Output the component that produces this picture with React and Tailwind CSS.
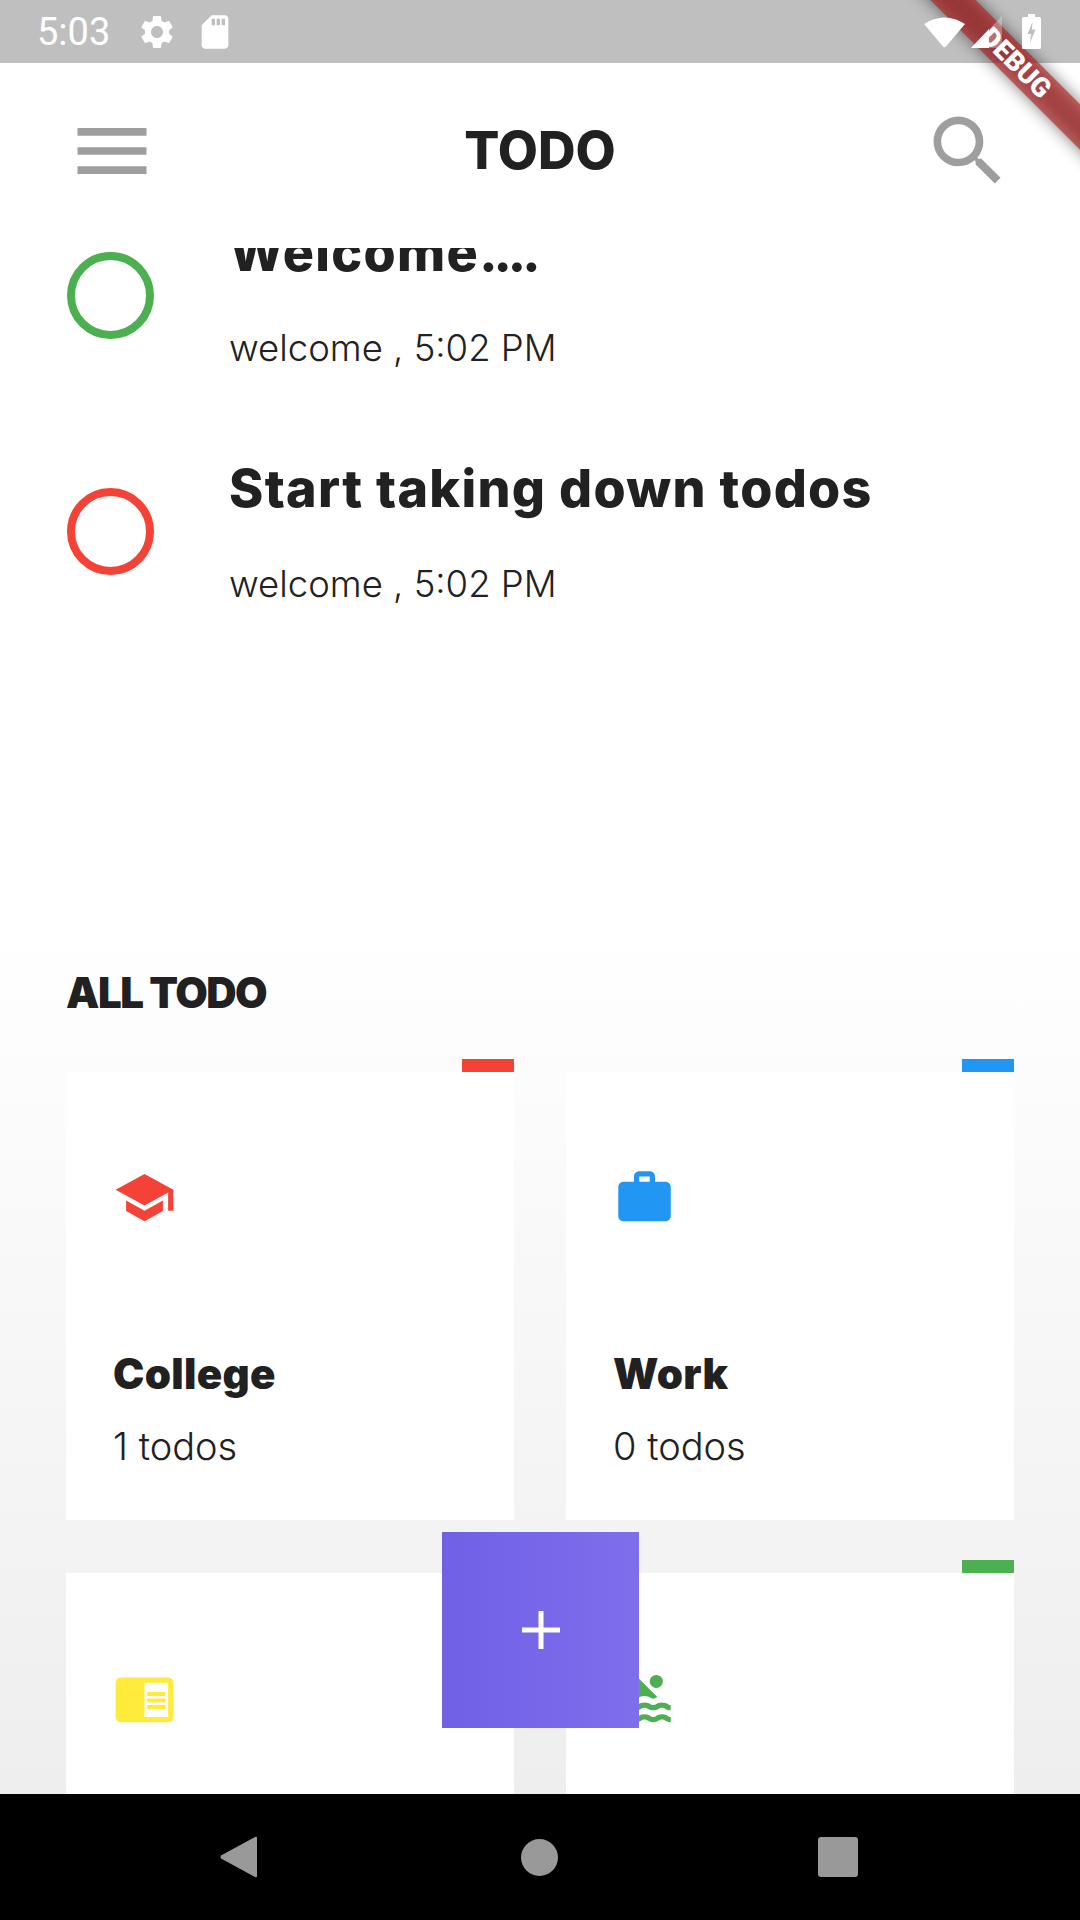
import { MdMenu, MdSearch, MdSettings, MdSdCard, MdSchool, MdWork, MdChromeReaderMode, MdPool } from 'react-icons/md';

const poppins = "font-['Inter','Noto_Sans',sans-serif]";

const todos = [
  { title: 'Welcome', dots: '....', sub: 'welcome , 5:02 PM', color: 'border-[#4caf50]' },
  { title: 'Start taking down todos', sub: 'welcome , 5:02 PM', color: 'border-[#f44336]' },
];

// the second row runs under the nav bar, so its labels never show
const cards = [
  { id: 'college', name: 'College', count: '1 todos', Icon: MdSchool, text: 'text-[#f44336]', tab: 'bg-[#f44336]' },
  { id: 'work', name: 'Work', count: '0 todos', Icon: MdWork, text: 'text-[#2196f3]', tab: 'bg-[#2196f3]' },
  { id: 'notes', Icon: MdChromeReaderMode, text: 'text-[#ffeb3b]', tab: 'bg-transparent' },
  { id: 'sports', Icon: MdPool, text: 'text-[#4caf50]', tab: 'bg-[#4caf50]' },
];

const StatusBar = () => (
  <div className="h-[63px] shrink-0 bg-[#bfbfbf] flex items-center text-white">
    <span className="ml-[37px] w-[100px] text-[38px] leading-none font-['Roboto',sans-serif]">5:03</span>
    <MdSettings size={40} />
    <MdSdCard size={40} className="ml-[18px]" />
    {/* system icons draw on top of the app's debug ribbon */}
    <div className="relative z-10 ml-auto mr-[39px] flex items-center">
      <svg width="41" height="32" viewBox="0 0 41 32">
        <path d="M0 8 Q20.5 -5 41 8 L22 30.5 Q20.5 32 19 30.5 Z" fill="#fff" />
      </svg>
      <svg width="31" height="32" viewBox="0 0 31 32" className="ml-[6px]">
        <path d="M31 0 V32 H0 Z" fill="#fff" fillOpacity="0.3" />
        <path d="M18 13 V32 H0 Z" fill="#fff" />
      </svg>
      <svg width="19" height="35" viewBox="0 0 19 35" className="ml-[20px]">
        <path d="M6 0 H13 V3 H17.5 Q19 3 19 4.5 V33.5 Q19 35 17.5 35 H1.5 Q0 35 0 33.5 V4.5 Q0 3 1.5 3 H6 Z" fill="#fff" />
        <path d="M10.5 8 L5.5 20 H9 L8 29 L13.5 15.5 H10 Z" fill="#bfbfbf" />
      </svg>
    </div>
  </div>
);

const Header = () => (
  <div className="h-[185px] shrink-0 bg-white flex items-start justify-between px-[66px] pt-[42px] text-[#9e9e9e]">
    <MdMenu size={92} />
    <h1 className={`${poppins} text-[52px] leading-[91px] font-extrabold text-[#212121]`}>TODO</h1>
    <MdSearch size={92} />
  </div>
);

const TodoRow = ({ title, dots, sub, color }) => (
  <div className="h-[236px] shrink-0 flex items-start pl-[67px]">
    <div className={`w-[87px] h-[87px] mt-[29px] rounded-full border-[8px] shrink-0 ${color}`} />
    <div className="ml-[75px]">
      <div className={`${poppins} text-[52px] leading-[60px] font-extrabold tracking-[1.3px] text-[#212121]`}>
        {title}
        {dots && <span className="tracking-[-4px]">{dots}</span>}
      </div>
      <div className={`${poppins} mt-[43px] text-[36.5px] leading-[44px] font-light text-[#212121]`}>{sub}</div>
    </div>
  </div>
);

const Card = ({ name, count, Icon, text, tab }) => (
  <div className="relative h-[448px] bg-white pl-[47px] pt-[94px]">
    <div className={`absolute right-0 -top-[13px] w-[52px] h-[13px] ${tab}`} />
    <Icon size={63} className={text} />
    {name && (
      <>
        <div className={`${poppins} mt-[120px] text-[42px] leading-[50px] font-black tracking-[0.3px] text-[#212121]`}>{name}</div>
        <div className={`${poppins} mt-[25px] text-[38px] leading-[44px] font-light text-[#212121]`}>{count}</div>
      </>
    )}
  </div>
);

export default function App() {
  return (
    <div className="relative w-[1080px] h-[1920px] overflow-hidden flex flex-col bg-white">
      <StatusBar />
      <Header />
      <div className="flex-1 min-h-0 overflow-hidden flex flex-col bg-[linear-gradient(to_bottom,#ffffff_0px,#ffffff_680px,#eeeeee_1546px)]">
        <div className="h-[720px] shrink-0 overflow-hidden">
          <div className="-mt-[25px]">
            {todos.map((t) => (
              <TodoRow key={t.title} {...t} />
            ))}
          </div>
        </div>
        <div className={`${poppins} ml-[66px] text-[42px] leading-[50px] font-black tracking-[-1.5px] text-[#212121] shrink-0`}>ALL TODO</div>
        <div className="mt-[54px] px-[66px] grid grid-cols-2 gap-x-[52px] gap-y-[53px] shrink-0">
          {cards.map((c) => (
            <Card key={c.id} {...c} />
          ))}
        </div>
      </div>
      <div className="h-[126px] shrink-0 bg-black flex items-center pl-[220px]">
        <svg width="37" height="42" viewBox="0 0 37 42">
          <path d="M35 1 Q37 0 37 2 V40 Q37 42 35 41 L1 22.5 Q0 21 1 19.5 Z" fill="#999" />
        </svg>
        <div className="ml-[264px] w-[37px] h-[37px] rounded-full bg-[#999]" />
        <div className="ml-[260px] w-[40px] h-[40px] rounded-[3px] bg-[#999]" />
      </div>
      {/* add button floats over the cards */}
      <div className="absolute left-[442px] top-[1532px] w-[197px] h-[196px] bg-gradient-to-r from-[#7060e6] to-[#7f6eec] flex items-center justify-center">
        <svg width="38" height="38" viewBox="0 0 38 38">
          <path d="M16.5 0 H21.5 V16.5 H38 V21.5 H21.5 V38 H16.5 V21.5 H0 V16.5 H16.5 Z" fill="#fff" />
        </svg>
      </div>
      {/* debug ribbon: blurred shadow sits behind the see-through band */}
      <div className="absolute left-[866px] top-[47px] w-[300px] h-[32px] rotate-45">
        <div className="absolute inset-0 bg-black/50 blur-[8px]" />
        <div className="absolute inset-0 bg-[rgba(183,28,28,0.627)] flex items-center justify-center text-white text-[27px] leading-none font-black font-['Roboto',sans-serif]">
          DEBUG
        </div>
      </div>
    </div>
  );
}
